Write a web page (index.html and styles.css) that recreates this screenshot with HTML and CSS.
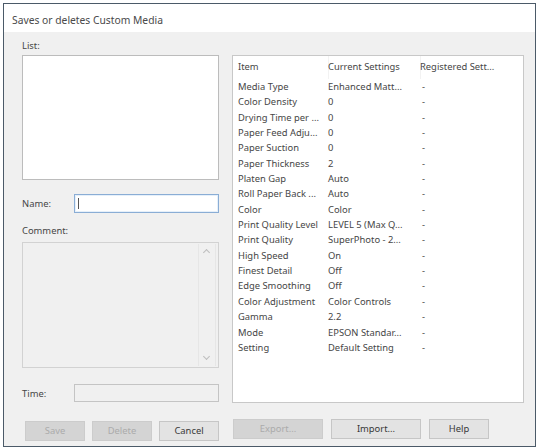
FILE: index.html
```html
<!DOCTYPE html>
<html>
<head lang="en">
	<meta charset="utf-8">
	<title>Custom Media</title>
	<link rel="stylesheet" href="styles.css">
</head>
<body>
	<div class="dlg">
		<div class="dlg-title">Saves or deletes Custom Media</div>
		<div class="dlg-body">
			<div class="col-left">
				<div class="lbl lbl-list">List:</div>
				<div class="listbox"></div>
				<div class="row row-name">
					<span class="row-lbl">Name:</span>
					<div class="field field-focus"><span class="caret"></span></div>
				</div>
				<div class="lbl lbl-comment">Comment:</div>
				<div class="memo">
					<div class="memo-scroll">
						<span class="arr arr-up"></span>
						<span class="arr arr-down"></span>
					</div>
				</div>
				<div class="row row-time">
					<span class="row-lbl">Time:</span>
					<div class="field field-off"></div>
				</div>
				<div class="btns">
					<a class="btn btn-off btn-s">Save</a>
					<a class="btn btn-off btn-s">Delete</a>
					<a class="btn btn-s">Cancel</a>
				</div>
			</div>
			<div class="col-right">
				<div class="lv">
					<div class="lv-head">
						<span class="c1">Item</span>
						<span class="c2">Current Settings</span>
						<span class="c3">Registered Sett...</span>
					</div>
					<div class="lv-row"><span class="c1">Media Type</span><span class="c2">Enhanced Matt...</span><span class="c3">-</span></div>
					<div class="lv-row"><span class="c1">Color Density</span><span class="c2">0</span><span class="c3">-</span></div>
					<div class="lv-row"><span class="c1">Drying Time per ...</span><span class="c2">0</span><span class="c3">-</span></div>
					<div class="lv-row"><span class="c1">Paper Feed Adju...</span><span class="c2">0</span><span class="c3">-</span></div>
					<div class="lv-row"><span class="c1">Paper Suction</span><span class="c2">0</span><span class="c3">-</span></div>
					<div class="lv-row"><span class="c1">Paper Thickness</span><span class="c2">2</span><span class="c3">-</span></div>
					<div class="lv-row"><span class="c1">Platen Gap</span><span class="c2">Auto</span><span class="c3">-</span></div>
					<div class="lv-row"><span class="c1">Roll Paper Back ...</span><span class="c2">Auto</span><span class="c3">-</span></div>
					<div class="lv-row"><span class="c1">Color</span><span class="c2">Color</span><span class="c3">-</span></div>
					<div class="lv-row"><span class="c1">Print Quality Level</span><span class="c2">LEVEL 5 (Max Q...</span><span class="c3">-</span></div>
					<div class="lv-row"><span class="c1">Print Quality</span><span class="c2">SuperPhoto - 2...</span><span class="c3">-</span></div>
					<div class="lv-row"><span class="c1">High Speed</span><span class="c2">On</span><span class="c3">-</span></div>
					<div class="lv-row"><span class="c1">Finest Detail</span><span class="c2">Off</span><span class="c3">-</span></div>
					<div class="lv-row"><span class="c1">Edge Smoothing</span><span class="c2">Off</span><span class="c3">-</span></div>
					<div class="lv-row"><span class="c1">Color Adjustment</span><span class="c2">Color Controls</span><span class="c3">-</span></div>
					<div class="lv-row"><span class="c1">Gamma</span><span class="c2">2.2</span><span class="c3">-</span></div>
					<div class="lv-row"><span class="c1">Mode</span><span class="c2">EPSON Standar...</span><span class="c3">-</span></div>
					<div class="lv-row"><span class="c1">Setting</span><span class="c2">Default Setting</span><span class="c3">-</span></div>
				</div>
				<div class="btns">
					<a class="btn btn-off btn-l">Export...</a>
					<a class="btn btn-l">Import...</a>
					<a class="btn btn-s">Help</a>
				</div>
			</div>
		</div>
	</div>
</body>
</html>
```

FILE: styles.css
```css
body{
	margin: 0;
	padding: 0;
	background: #fff;
	font-family: "Noto Sans", "Liberation Sans", sans-serif;
	font-size: 9.4px;
	color: #464646;
}
.dlg{
	margin: 3px 0 0 3px;
	width: 531px;
	height: 442px;
	border: 1px solid #4b5a68;
	background: #f0f0f0;
}
.dlg-title{
	height: 28px;
	line-height: 32px;
	padding-left: 8px;
	background: #fff;
	font-size: 10.3px;
	color: #4a4a4a;
}
.dlg-body{
	display: flex;
	padding: 0 0 0 18px;
}
.col-left{
	width: 197px;
	padding-top: 7px;
}
.col-right{
	width: 292px;
	margin-left: 13px;
	padding-top: 23px;
}
.lbl{
	height: 14px;
	line-height: 14px;
}
.lbl-list{
	margin-bottom: 2px;
}
.listbox{
	height: 123px;
	background: #fff;
	border: 1px solid #bcbcbc;
}
.row{
	display: flex;
	align-items: center;
}
.row-lbl{
	width: 52px;
}
.row-name{
	margin-top: 14px;
	height: 19px;
}
.field{
	flex: 1;
	height: 100%;
	box-sizing: border-box;
	border: 1px solid #c4c4c4;
	background: #f0f0f0;
}
.field-focus{
	border: 1px solid #8aadd5;
	background: #fff;
	box-shadow: inset 0 0 0 1px #e6f0fa;
	display: flex;
	align-items: center;
	padding-left: 3px;
}
.caret{
	width: 1px;
	height: 11px;
	background: #555;
}
.lbl-comment{
	margin-top: 11px;
	margin-bottom: 4px;
}
.memo{
	height: 122px;
	border: 1px solid #d2d2d2;
	background: #f0f0f0;
	display: flex;
	justify-content: flex-end;
	padding: 1px 2px 1px 0;
}
.memo-scroll{
	position: relative;
	width: 16px;
	border-left: 1px solid #e6e6e6;
	border-right: 1px solid #e6e6e6;
}
.arr{
	position: absolute;
	left: 5px;
	width: 4px;
	height: 4px;
	border-left: 1px solid #bdbdbd;
	border-top: 1px solid #bdbdbd;
}
.arr-up{
	top: 6px;
	transform: rotate(45deg);
}
.arr-down{
	bottom: 7px;
	transform: rotate(225deg);
}
.row-time{
	margin-top: 16px;
	height: 18px;
}
.btns{
	display: flex;
	gap: 7px;
	margin-top: 16px;
	padding-left: 3px;
}
.col-left .btns{
	margin-top: 19px;
}
.col-right .btns{
	padding-left: 1px;
	gap: 8px;
}
.btn{
	display: block;
	box-sizing: border-box;
	height: 20px;
	line-height: 18px;
	text-align: center;
	background: #e3e3e3;
	border: 1px solid #c6c6c6;
	color: #383838;
}
.btn-off{
	background: #d4d4d4;
	border-color: #cccccc;
	color: #ababab;
}
.btn-s{
	width: 60px;
}
.btn-l{
	width: 90px;
}
.lv{
	height: 346px;
	background: #fff;
	border: 1px solid #c8c8c8;
}
.lv-head, .lv-row{
	display: flex;
	padding-left: 5px;
	white-space: nowrap;
}
.lv-head{
	height: 23px;
	line-height: 22px;
}
.lv-row{
	height: 15.35px;
	line-height: 15px;
}
.c1{
	width: 90px;
}
.c2{
	width: 92px;
}
.c3{
	padding-left: 2px;
}
.lv-head .c1, .lv-head .c2{
	border-right: 1px solid #f2f2f2;
	margin-right: -1px;
}
.lv-head .c3{
	padding-left: 0;
}
```
